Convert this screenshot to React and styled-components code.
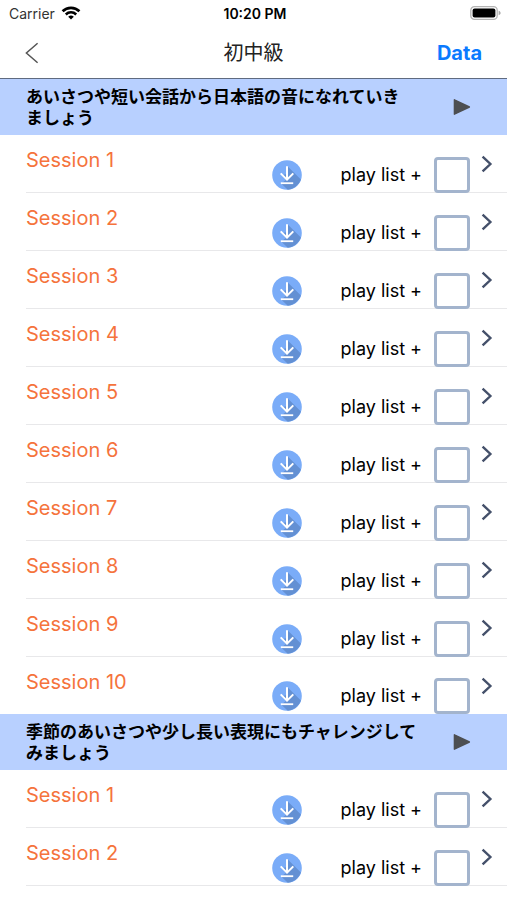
import styled, { createGlobalStyle } from "styled-components";

const sections = [
  {
    id: "a",
    title: "あいさつや短い会話から日本語の音になれていき\nましょう",
    sessions: 10,
  },
  {
    id: "b",
    title: "季節のあいさつや少し長い表現にもチャレンジして\nみましょう",
    sessions: 2,
  },
];

function WifiIcon() {
  return (
    <svg width="20" height="14" viewBox="0 0 20 14" fill="none" stroke="#000">
      <path d="M1.6 5.3a12 12 0 0 1 16.8 0" strokeWidth="2.7" />
      <path d="M4.8 8.5a7.4 7.4 0 0 1 10.4 0" strokeWidth="2.5" />
      <path
        d="M10 13.6 7.2 10.8a4 4 0 0 1 5.6 0Z"
        fill="#000"
        stroke="none"
      />
    </svg>
  );
}

function BatteryIcon() {
  return (
    <svg width="31" height="14" viewBox="0 0 31 14" fill="none">
      <rect x="0.8" y="0.7" width="26.4" height="12.6" rx="3.6" stroke="#b4b4b4" strokeWidth="1.3" />
      <rect x="2.6" y="2.5" width="22.8" height="9" rx="2" fill="#000" />
      <path d="M28.6 4.8c1.4.4 2 1.2 2 2.2s-.6 1.8-2 2.2Z" fill="#a9a9a9" />
    </svg>
  );
}

function BackIcon() {
  return (
    <svg width="14" height="22" viewBox="0 0 14 22" fill="none">
      <path d="M12.6 1.2 1.4 11l11.2 9.8" stroke="#555" strokeWidth="1.5" />
    </svg>
  );
}

function PlayIcon() {
  return (
    <svg width="18" height="18" viewBox="0 0 18 18">
      <path
        d="M1.4 1.8 16.4 9 1.4 16.2Z"
        fill="#4d4f52"
        stroke="#4d4f52"
        strokeWidth="1.4"
        strokeLinejoin="round"
      />
    </svg>
  );
}

function DownloadIcon() {
  return (
    <svg width="30" height="30" viewBox="0 0 30 30" fill="none">
      <circle cx="15" cy="15" r="14.8" fill="#7aacf8" />
      {/* long shadow under the arrow */}
      <path
        d="M15.8 6.4 28.9 19.5A14.8 14.8 0 0 1 15.8 29.7L9.2 23.5 14 20 9.5 15.2l4.8-1Z"
        fill="#6390d3"
      />
      <path d="M15 6.2v13.4M8.7 13.4l6.3 6.2 6.3-6.2" stroke="#fff" strokeWidth="2" />
      <path d="M8.8 23.2h12.4" stroke="#fff" strokeWidth="1.8" />
    </svg>
  );
}

function ChevronIcon() {
  return (
    <svg width="12" height="18" viewBox="0 0 12 18" fill="none">
      <path d="M1.6 1.6 9.4 9l-7.8 7.4" stroke="#44506a" strokeWidth="2.4" />
    </svg>
  );
}

function SessionRow({ id, number }) {
  return (
    <Row>
      <SessionLink href={`#${id}`}>Session {number}</SessionLink>
      <DownloadButton type="button" aria-label={`Download session ${number}`}>
        <DownloadIcon />
      </DownloadButton>
      <PlaylistLabel htmlFor={id}>play list +</PlaylistLabel>
      <Checkbox type="checkbox" id={id} />
      <OpenButton type="button" aria-label={`Open session ${number}`}>
        <ChevronIcon />
      </OpenButton>
    </Row>
  );
}

export default function App() {
  return (
    <Screen>
      <GlobalStyle />
      <StatusBar>
        <Carrier>
          Carrier <WifiIcon />
        </Carrier>
        <Clock>10:20 PM</Clock>
        <Battery>
          <BatteryIcon />
        </Battery>
      </StatusBar>
      <NavBar>
        <BackButton type="button" aria-label="Back">
          <BackIcon />
        </BackButton>
        <Title>初中級</Title>
        <DataButton type="button">Data</DataButton>
      </NavBar>
      <main>
        {sections.map(({ id, title, sessions }) => (
          <Section key={id}>
            <SectionHeader>
              <SectionTitle>{title}</SectionTitle>
              <PlayButton type="button" aria-label="Play all">
                <PlayIcon />
              </PlayButton>
            </SectionHeader>
            <List>
              {Array.from({ length: sessions }, (_, i) => (
                <SessionRow key={i} id={`${id}-${i + 1}`} number={i + 1} />
              ))}
            </List>
          </Section>
        ))}
      </main>
    </Screen>
  );
}

const GlobalStyle = createGlobalStyle`
  * {
    box-sizing: border-box;
  }

  body {
    margin: 0;
    background: #fff;
    color: #000;
    font-family: Inter, "Noto Sans CJK JP", sans-serif;
  }

  button {
    display: flex;
    padding: 0;
    border: none;
    background: transparent;
    font-family: inherit;
    cursor: pointer;
  }

  svg {
    display: block;
  }
`;

const Screen = styled.div`
  width: 100%;
  min-height: 100vh;
`;

const StatusBar = styled.div`
  display: grid;
  grid-template-columns: 1fr auto 1fr;
  align-items: center;
  height: 26px;
  padding: 0 6px 0 9px;
  font-size: 14px;
`;

const Carrier = styled.span`
  display: flex;
  align-items: center;
  gap: 6px;
  color: #333;
`;

const Clock = styled.span`
  font-weight: 600;
`;

const Battery = styled.span`
  justify-self: end;
`;

const NavBar = styled.header`
  display: grid;
  grid-template-columns: 1fr auto 1fr;
  align-items: center;
  height: 53px;
  padding: 2px 25px 0;
  border-bottom: 1px solid #5f6b80;
`;

const BackButton = styled.button`
  justify-self: start;
`;

const Title = styled.h1`
  margin: 0;
  color: #222;
  font-size: 20px;
  font-weight: 400;
  line-height: 28px;
`;

const DataButton = styled.button`
  justify-self: end;
  color: #0a7aff;
  font-size: 20px;
  font-weight: 700;
`;

const List = styled.ul`
  margin: 0;
  padding: 0;
  list-style: none;
`;

const Row = styled.li`
  display: flex;
  align-items: flex-end;
  height: 58px;
  margin-left: 26px;
  padding-right: 14px;
  box-shadow: inset 0 -1px #e8e8ea;
`;

const Section = styled.section`
  &:not(:last-of-type) ${Row}:last-child {
    height: 57px;
    box-shadow: none;
  }
`;

const SectionHeader = styled.div`
  display: flex;
  align-items: center;
  justify-content: space-between;
  height: 56px;
  padding: 0 36px 0 26px;
  background: #b8d0ff;
`;

const SectionTitle = styled.h2`
  margin: 0;
  padding-top: 2px;
  font-size: 17px;
  font-weight: 700;
  line-height: 21px;
  white-space: pre-line;
`;

const PlayButton = styled.button`
  flex: none;
`;

const SessionLink = styled.a`
  flex: 1;
  align-self: flex-start;
  padding-top: 13px;
  color: #f5733c;
  font-size: 20px;
  line-height: 24px;
  text-decoration: none;
`;

const DownloadButton = styled.button`
  margin: 0 39px 3px 0;
`;

const PlaylistLabel = styled.label`
  margin-right: 12px;
  padding-bottom: 6px;
  font-size: 18px;
  line-height: 24px;
`;

const Checkbox = styled.input`
  appearance: none;
  width: 36px;
  height: 36px;
  margin: 0 11px 0 0;
  border: 3px solid #a3b4cd;
  border-radius: 4px;
  background: #fff;
  cursor: pointer;

  &:checked {
    background: #a3b4cd;
  }
`;

const OpenButton = styled.button`
  align-self: flex-start;
  margin-top: 20px;
`;
